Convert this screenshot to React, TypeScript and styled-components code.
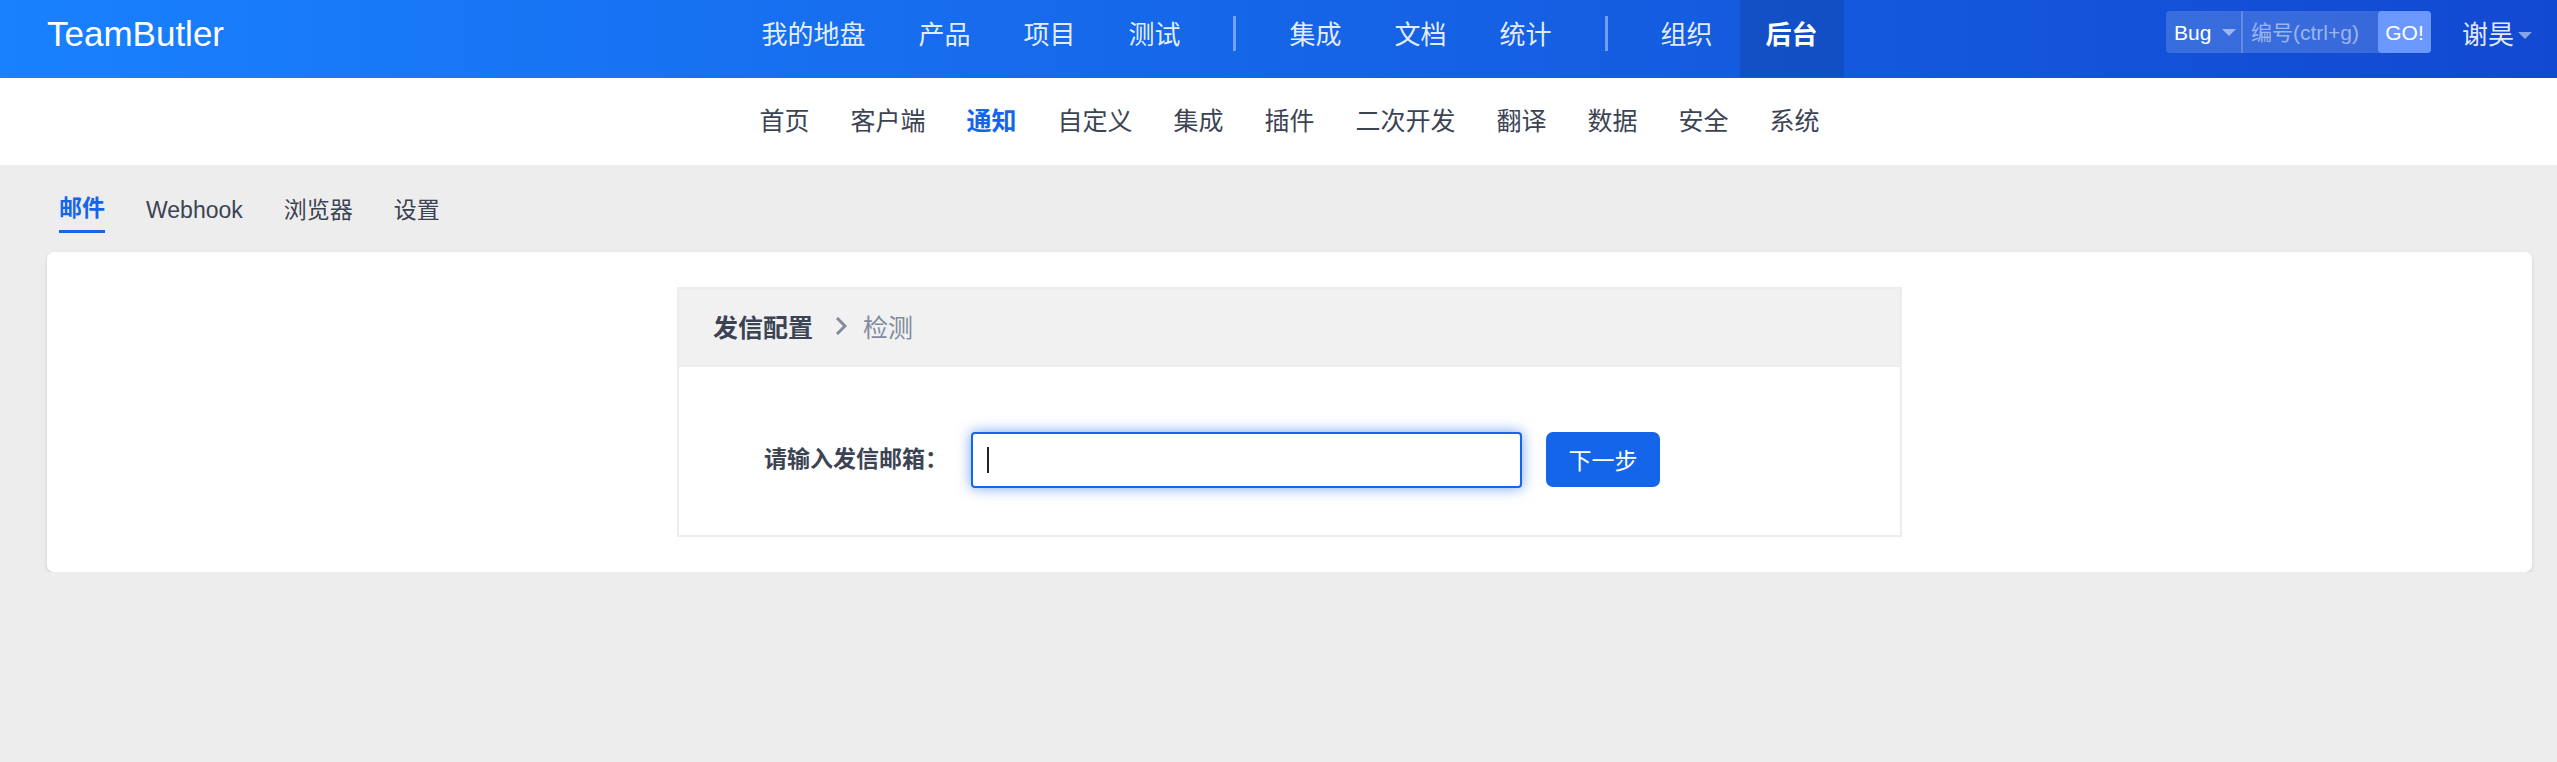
import React from "react";
import styled, { createGlobalStyle } from "styled-components";

const GlobalStyle = createGlobalStyle`
  *, *::before, *::after { box-sizing: border-box; }
  body {
    margin: 0;
    background: #ededed;
    color: #3c4353;
    font-family: "Liberation Sans", "Noto Sans CJK SC", sans-serif;
    font-size: 23px;
  }
  a { color: inherit; text-decoration: none; }
  button, input, select { font-family: inherit; }
`;

const Header = styled.header`
  display: grid;
  grid-template-columns: 1fr auto 1fr;
  min-height: 78px;
  padding: 0 25px 0 47px;
  background: linear-gradient(90deg, #1981fe 0%, #1249d1 100%);
  color: #fff;
`;

const Brand = styled.a`
  font-size: 35px;
  line-height: 68px;
`;

const MainNav = styled.nav`
  display: flex;
  gap: 1px;
`;

const MainLink = styled.a<{ $active?: boolean }>`
  height: 77px;
  padding: 0 26px;
  font-size: 26px;
  line-height: 70px;
  white-space: nowrap;
  color: ${(p) => (p.$active ? "#fff" : "rgba(255, 255, 255, 0.9)")};
  font-weight: ${(p) => (p.$active ? 700 : 400)};
  background: ${(p) => (p.$active ? "rgba(16, 60, 150, 0.35)" : "none")};
`;

const Divider = styled.span`
  width: 3px;
  height: 35px;
  margin: 16px 26px 0;
  background: rgba(255, 255, 255, 0.4);
`;

const Tools = styled.div`
  display: flex;
  justify-content: flex-end;
  align-items: flex-start;
  gap: 31px;
`;

const SearchForm = styled.form`
  display: flex;
  height: 42px;
  margin-top: 11px;
  border-radius: 4px;
  background: rgba(255, 255, 255, 0.16);
`;

const TypePicker = styled.label`
  display: flex;
  align-items: center;
  width: 77px;
  padding: 0 5px 0 8px;
  border-right: 2px solid rgba(255, 255, 255, 0.2);
`;

const TypeSelect = styled.select`
  flex: 1;
  min-width: 0;
  padding: 0;
  border: 0;
  outline: 0;
  appearance: none;
  background: none;
  color: #fff;
  font-size: 21px;
`;

const SearchInput = styled.input`
  width: 135px;
  padding: 2px 8px 0;
  border: 0;
  outline: 0;
  background: none;
  color: #fff;
  font-size: 21px;
  &::placeholder { color: rgba(255, 255, 255, 0.5); }
`;

const GoButton = styled.button`
  width: 53px;
  padding: 2px 0 0;
  border: 0;
  border-radius: 4px;
  background: #6a98ff;
  color: #fff;
  font-size: 21px;
`;

const UserButton = styled.button`
  display: flex;
  align-items: center;
  gap: 4px;
  padding: 0;
  border: 0;
  background: none;
  color: rgba(255, 255, 255, 0.9);
  font-size: 26px;
  line-height: 70px;
`;

const CaretIcon = styled.svg`
  flex: none;
  width: 14px;
  height: 7px;
  fill: rgba(255, 255, 255, 0.5);
`;

const SubNav = styled.nav`
  display: flex;
  justify-content: center;
  gap: 41px;
  padding: 0 25px 0 47px;
  background: #fff;
`;

const SubLink = styled.a<{ $active?: boolean }>`
  font-size: 25px;
  line-height: 87px;
  white-space: nowrap;
  color: ${(p) => (p.$active ? "#1565eb" : "inherit")};
  font-weight: ${(p) => (p.$active ? 700 : 400)};
`;

const Main = styled.main`
  padding: 0 25px 0 47px;
`;

const Tabs = styled.nav`
  display: flex;
  align-items: center;
  gap: 41px;
  height: 87px;
  padding: 2px 12px 0;
`;

const Tab = styled.a<{ $active?: boolean }>`
  line-height: 44px;
  color: ${(p) => (p.$active ? "#1565eb" : "inherit")};
  font-weight: ${(p) => (p.$active ? 700 : 400)};
  border-bottom: ${(p) => (p.$active ? "3px solid #1565eb" : "0")};
`;

const Card = styled.section`
  padding: 35px;
  border-radius: 7px;
  background: #fff;
  box-shadow: 0 2px 4px rgba(0, 0, 0, 0.12);
`;

const Panel = styled.div`
  max-width: 1225px;
  margin: 0 auto;
  border: 2px solid #ededed;
`;

const PanelHead = styled.div`
  display: flex;
  align-items: center;
  height: 78px;
  padding: 0 34px 2px;
  border-bottom: 2px solid #ededed;
  background: #f1f1f1;
  font-size: 25px;
`;

const PanelTitle = styled.h1`
  margin: 0;
  font-size: 25px;
`;

const ChevronIcon = styled.svg`
  width: 12px;
  height: 18px;
  margin: 0 16px 0 22px;
  fill: none;
  stroke: #838a9d;
  stroke-width: 3;
`;

const NextStep = styled.span`
  color: #838a9d;
`;

const MailForm = styled.form`
  display: flex;
  align-items: flex-start;
  padding: 65px 85px 47px;
`;

const FieldLabel = styled.label`
  font-weight: 700;
  line-height: 54px;
  white-space: nowrap;
`;

const Field = styled.div`
  position: relative;
  flex: 0 1 551px;
  margin: 0 24px 0 23px;
`;

const MailInput = styled.input`
  display: block;
  width: 100%;
  height: 56px;
  padding: 0 14px;
  border: 2px solid #1565eb;
  border-radius: 4px;
  outline: 0;
  caret-color: transparent;
  font-size: 23px;
  box-shadow: 0 0 14px rgba(21, 101, 235, 0.6);
`;

const TextCursor = styled.span`
  position: absolute;
  top: 15px;
  left: 16px;
  width: 2px;
  height: 26px;
  background: #222;
`;

const NextButton = styled.button`
  width: 114px;
  height: 55px;
  padding: 0 0 2px;
  border: 0;
  border-radius: 7px;
  background: #1565eb;
  color: #fff;
  font-size: 23px;
`;

const mainGroups = [
  ["我的地盘", "产品", "项目", "测试"],
  ["集成", "文档", "统计"],
  ["组织", "后台"],
];
const subItems = ["首页", "客户端", "通知", "自定义", "集成", "插件", "二次开发", "翻译", "数据", "安全", "系统"];
const tabItems = ["邮件", "Webhook", "浏览器", "设置"];

const Caret = () => (
  <CaretIcon viewBox="0 0 14 7" aria-hidden="true">
    <path d="M0 0h14L7 7z" />
  </CaretIcon>
);

export default function App() {
  return (
    <>
      <GlobalStyle />
      <Header>
        <Brand href="#">TeamButler</Brand>
        <MainNav>
          {mainGroups.map((group, index) => (
            <React.Fragment key={index}>
              {index > 0 && <Divider />}
              {group.map((name) => (
                <MainLink key={name} href="#" $active={name === "后台"}>{name}</MainLink>
              ))}
            </React.Fragment>
          ))}
        </MainNav>
        <Tools>
          <SearchForm>
            <TypePicker>
              <TypeSelect aria-label="类型"><option>Bug</option></TypeSelect>
              <Caret />
            </TypePicker>
            <SearchInput aria-label="编号" placeholder="编号(ctrl+g)" />
            <GoButton type="button">GO!</GoButton>
          </SearchForm>
          <UserButton type="button">谢昊<Caret /></UserButton>
        </Tools>
      </Header>
      <SubNav>
        {subItems.map((name) => (
          <SubLink key={name} href="#" $active={name === "通知"}>{name}</SubLink>
        ))}
      </SubNav>
      <Main>
        <Tabs>
          {tabItems.map((name) => (
            <Tab key={name} href="#" $active={name === "邮件"}>{name}</Tab>
          ))}
        </Tabs>
        <Card>
          <Panel>
            <PanelHead>
              <PanelTitle>发信配置</PanelTitle>
              <ChevronIcon viewBox="0 0 12 18" aria-hidden="true">
                <path d="M2 1l8 8-8 8" />
              </ChevronIcon>
              <NextStep>检测</NextStep>
            </PanelHead>
            <MailForm>
              <FieldLabel htmlFor="sender">请输入发信邮箱：</FieldLabel>
              <Field>
                <MailInput id="sender" type="email" />
                <TextCursor />
              </Field>
              <NextButton type="button">下一步</NextButton>
            </MailForm>
          </Panel>
        </Card>
      </Main>
    </>
  );
}
